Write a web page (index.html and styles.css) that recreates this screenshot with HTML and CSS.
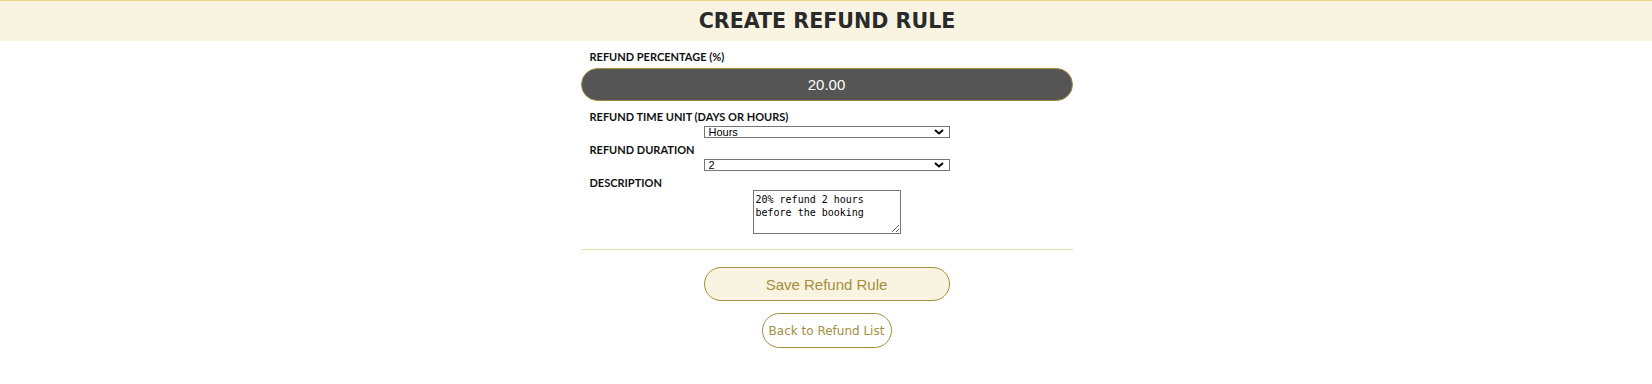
FILE: index.html
```html
<!DOCTYPE html>
<html lang="en">
<head>
  <meta charset="UTF-8">
  <meta name="viewport" content="width=device-width, initial-scale=1.0">
  <title>Create Refund Rule</title>
  <link rel="stylesheet" href="styles.css">
</head>
<body>

<header class="page-header">
  <h1>CREATE REFUND RULE</h1>
</header>

<form class="refund-form" onsubmit="return false;">
  <label class="field-label first" for="percentage">REFUND PERCENTAGE (%)</label>
  <input type="text" id="percentage" class="pill-input" value="20.00">

  <label class="field-label" for="unit">REFUND TIME UNIT (DAYS OR HOURS)</label>
  <div class="select-wrap">
    <select id="unit">
      <option>Days</option>
      <option selected>Hours</option>
    </select>
    <svg class="chevron" width="10" height="6" viewBox="0 0 10 6"><path d="M1 1 L5 4.5 L9 1" fill="none" stroke="#000" stroke-width="2"/></svg>
  </div>

  <label class="field-label" for="duration">REFUND DURATION</label>
  <div class="select-wrap">
    <select id="duration">
      <option>1</option>
      <option selected>2</option>
      <option>3</option>
    </select>
    <svg class="chevron" width="10" height="6" viewBox="0 0 10 6"><path d="M1 1 L5 4.5 L9 1" fill="none" stroke="#000" stroke-width="2"/></svg>
  </div>

  <label class="field-label desc" for="description">DESCRIPTION</label>
  <textarea id="description">20% refund 2 hours before the booking</textarea>

  <hr class="divider">

  <button type="submit" class="save-button">Save Refund Rule</button>
  <button type="button" class="back-button" onclick="history.back()">Back to Refund List</button>
</form>

</body>
</html>
```

FILE: styles.css
```css
body {
  margin: 0;
  background: #fff;
  font-family: 'Liberation Sans', Arial, sans-serif;
  color: #111;
}
.page-header {
  border-top: 1px solid #e9d689;
  background-color: #f8f4e1;
  height: 40px;
}
.page-header h1 {
  margin: 0;
  padding-left: 2px;
  text-align: center;
  font-family: 'DejaVu Sans', sans-serif;
  font-weight: bold;
  font-size: 20.6px;
  line-height: 40px;
  color: #2a2a2a;
}
.refund-form {
  width: 492px;
  margin: 0 auto;
  padding-left: 1px;
}
.field-label {
  display: block;
  padding-left: 9px;
  margin-top: 5px;
  font-family: Lato, sans-serif;
  font-weight: bold;
  font-size: 11px;
  line-height: 14px;
  color: #111;
}
.field-label.first {
  margin-top: 9px;
}
.pill-input {
  display: block;
  box-sizing: border-box;
  width: 100%;
  height: 33px;
  margin-top: 4px;
  border: 1px solid #a38f3e;
  border-radius: 17px;
  background-color: #545554;
  color: #fff;
  text-align: center;
  font-family: 'Liberation Sans', Arial, sans-serif;
  font-size: 15px;
}
.pill-input + .field-label {
  margin-top: 9px;
}
.select-wrap {
  position: relative;
  width: 246px;
  margin: 2px auto 0;
}
.select-wrap select {
  display: block;
  box-sizing: border-box;
  width: 100%;
  height: 12px;
  padding: 0 0 0 4px;
  border: 1px solid #767676;
  border-radius: 0;
  background: #fff;
  -webkit-appearance: none;
  appearance: none;
  font-family: 'Liberation Sans', Arial, sans-serif;
  font-size: 11px;
  line-height: 10px;
  color: #000;
}
.chevron {
  position: absolute;
  right: 6px;
  top: 3px;
  pointer-events: none;
}
.field-label.desc {
  margin-top: 5px;
}
textarea {
  display: block;
  box-sizing: border-box;
  width: 148px;
  height: 44px;
  margin: 0 auto;
  padding: 2px;
  border: 1px solid #767676;
  font-family: 'DejaVu Sans Mono', monospace;
  font-size: 10px;
  line-height: 13px;
  color: #000;
}
.divider {
  margin: 15px 0 0;
  border: none;
  border-top: 1px solid #ebe0a3;
  height: 0;
}
.save-button {
  display: block;
  box-sizing: border-box;
  width: 246px;
  height: 34px;
  margin: 17px auto 0;
  border: 1px solid #a38f3e;
  border-radius: 17px;
  background-color: #f8f4e1;
  color: #a38f3e;
  font-family: 'Liberation Sans', Arial, sans-serif;
  font-size: 15px;
  cursor: pointer;
}
.back-button {
  display: block;
  box-sizing: border-box;
  width: 130px;
  height: 35px;
  margin: 12px auto 0;
  padding: 0;
  border: 1px solid #a38f3e;
  border-radius: 18px;
  background-color: #fff;
  color: #a38f3e;
  font-family: 'DejaVu Sans', sans-serif;
  font-size: 12px;
  cursor: pointer;
}
```
